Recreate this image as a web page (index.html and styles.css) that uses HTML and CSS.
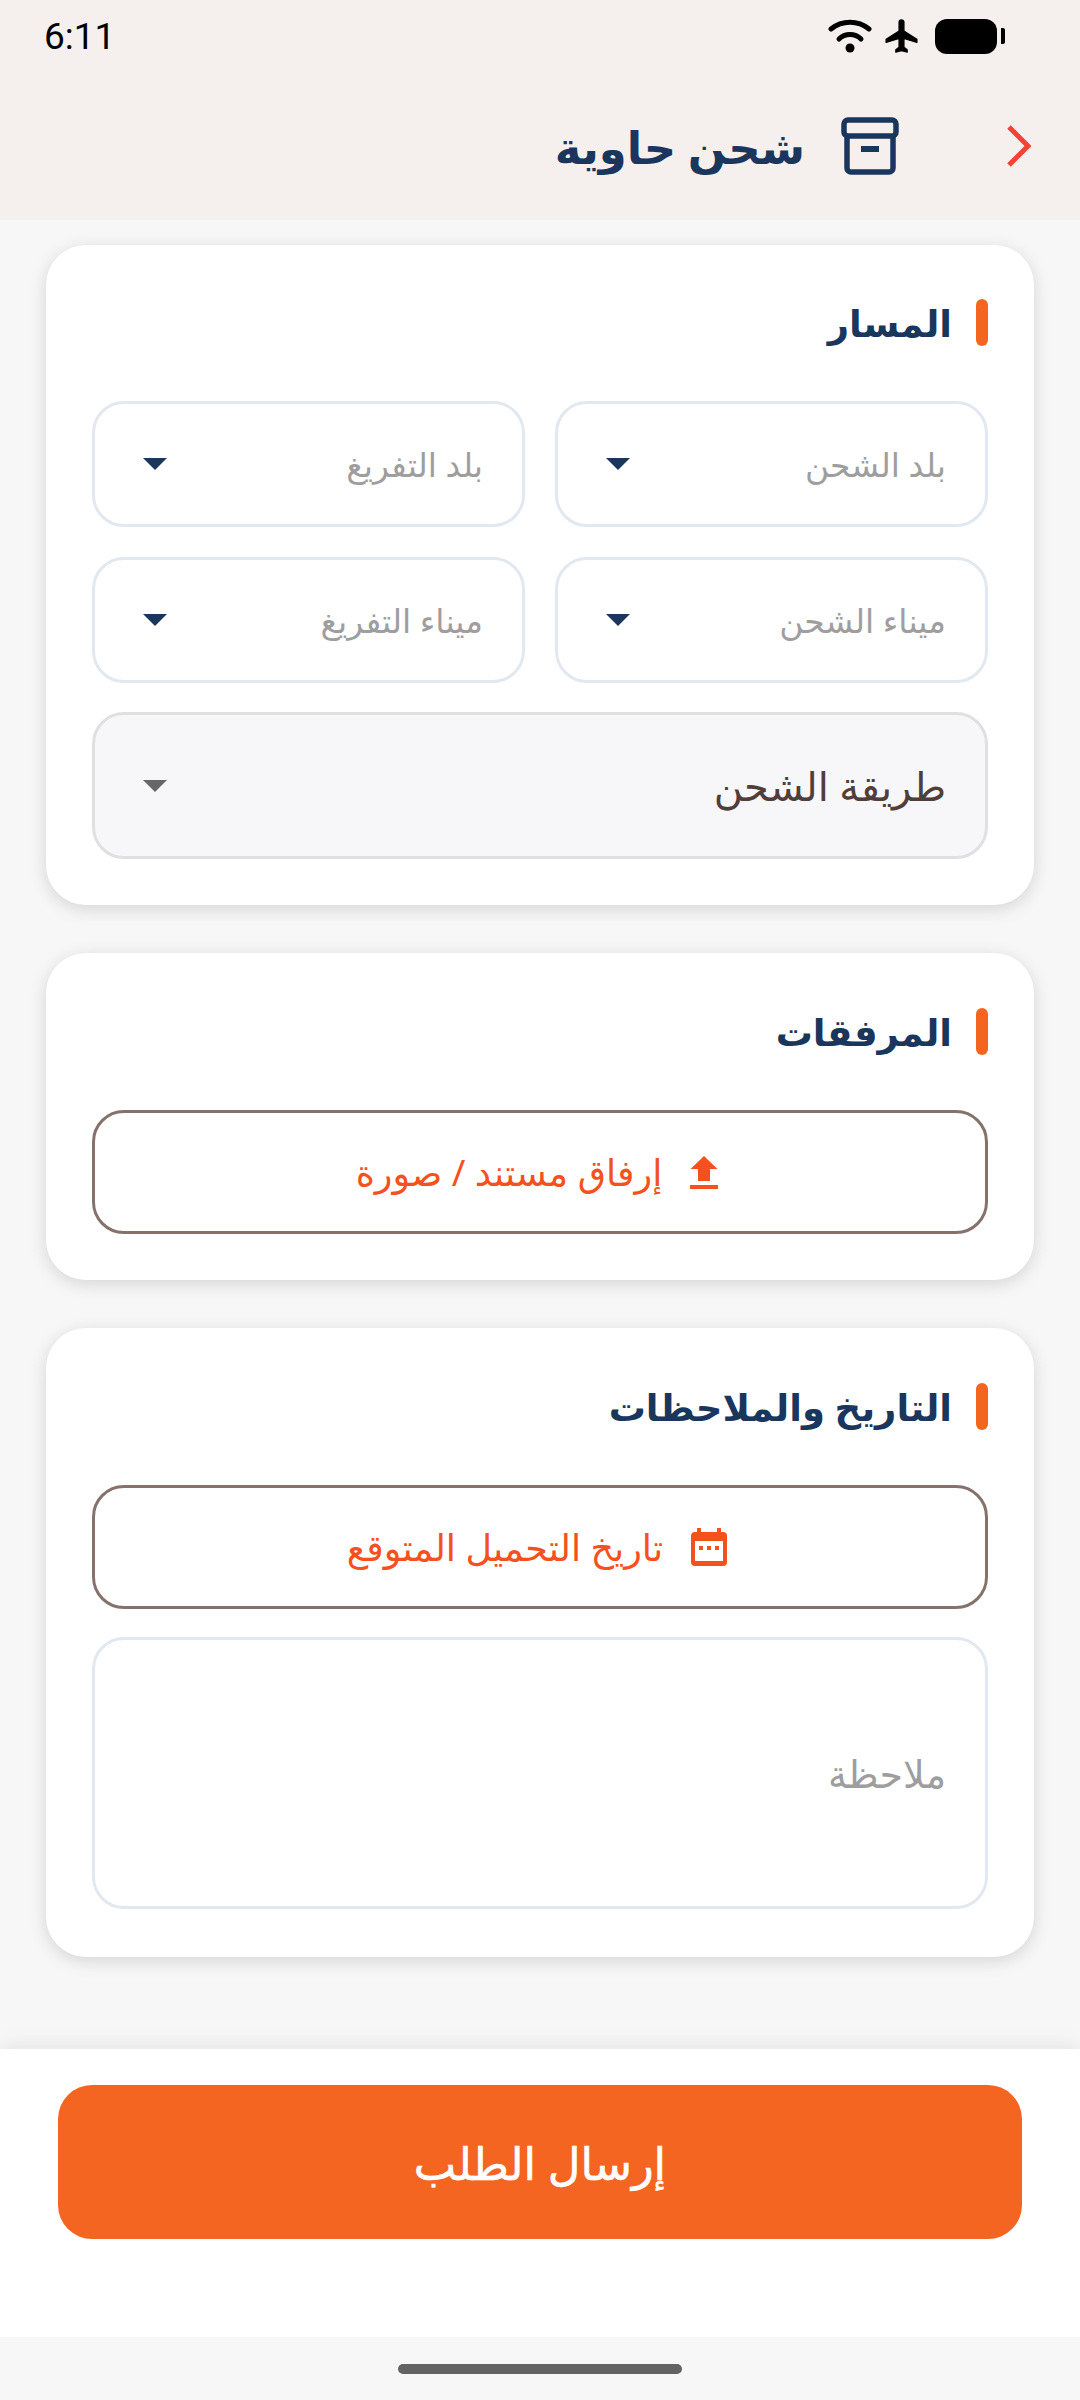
FILE: index.html
```html
<!DOCTYPE html>
<html lang="ar" dir="rtl">
<head>
    <meta charset="UTF-8">
    <meta name="viewport" content="width=device-width, initial-scale=1.0">
    <title>شحن حاوية</title>
    <link rel="stylesheet" href="styles.css">
</head>
<body>
    <div class="top-area">
        <div class="status-bar" dir="ltr">
            <span class="status-time">6:11</span>
            <div class="status-icons">
                <svg class="icon-wifi" viewBox="0 0 44 34" width="44" height="34">
                    <path d="M3 10C14 1 30 1 41 10" fill="none" stroke="#000" stroke-width="5" stroke-linecap="round"/>
                    <path d="M11 20C17 14 27 14 33 20" fill="none" stroke="#000" stroke-width="5" stroke-linecap="round"/>
                    <circle cx="22" cy="29" r="4.500" fill="#000"/>
                </svg>
                <svg class="icon-plane" viewBox="1.500 1.500 20 21" width="35" height="34">
                    <path d="M21 16v-2l-8-5V3.500C13 2.700 12.300 2 11.500 2S10 2.700 10 3.500V9l-8 5v2l8-2.500V19l-2 1.500V22l3.500-1 3.500 1v-1.500L13 19v-5.500l8 2.500z" fill="#000" stroke="#000" stroke-width="0.800" stroke-linejoin="round"/>
                </svg>
                <div class="battery"><div class="battery-body"></div><div class="battery-tip"></div></div>
            </div>
        </div>
        <header class="app-bar">
            <svg class="back-arrow" viewBox="0 0 24 42" width="24" height="42">
                <path d="M2 2L21 21L2 40" fill="none" stroke="#f44336" stroke-width="5"/>
            </svg>
            <svg class="box-icon" viewBox="0 0 58 58" width="58" height="58">
                <rect x="3" y="3" width="52" height="16" rx="4" fill="none" stroke="#1a365d" stroke-width="5.500"/>
                <path d="M6 19V51a4 4 0 0 0 4 4H48a4 4 0 0 0 4-4V19" fill="none" stroke="#1a365d" stroke-width="5.500"/>
                <rect x="20" y="29" width="18" height="6" fill="#1a365d"/>
            </svg>
            <h1 class="app-title">شحن حاوية</h1>
        </header>
    </div>

    <main class="content">
        <section class="card">
            <h2 class="card-title">المسار</h2>
            <div class="field-grid">
                <div class="select-field"><span>بلد الشحن</span><i class="caret"></i></div>
                <div class="select-field"><span>بلد التفريغ</span><i class="caret"></i></div>
                <div class="select-field"><span>ميناء الشحن</span><i class="caret"></i></div>
                <div class="select-field"><span>ميناء التفريغ</span><i class="caret"></i></div>
            </div>
            <div class="select-field method-field"><span>طريقة الشحن</span><i class="caret"></i></div>
        </section>

        <section class="card">
            <h2 class="card-title">المرفقات</h2>
            <div class="outline-btn">
                <svg viewBox="0 0 28 33" width="28" height="33">
                    <path d="M14 0L27.500 13H20V25H8V13H0.500z M0 29H28V33H0z" fill="#f4511e"/>
                </svg>
                <span>إرفاق مستند / صورة</span>
            </div>
        </section>

        <section class="card">
            <h2 class="card-title">التاريخ والملاحظات</h2>
            <div class="outline-btn">
                <svg viewBox="0 0 36 38" width="36" height="38">
                    <path d="M6 0h4v4H26V0h4v4h2a4 4 0 0 1 4 4V34a4 4 0 0 1-4 4H4a4 4 0 0 1-4-4V8a4 4 0 0 1 4-4h2z M4 13V33H32V13z" fill="#f4511e" fill-rule="evenodd"/>
                    <rect x="8" y="18" width="4" height="4" fill="#f4511e"/>
                    <rect x="16" y="18" width="4" height="4" fill="#f4511e"/>
                    <rect x="24" y="18" width="4" height="4" fill="#f4511e"/>
                </svg>
                <span>تاريخ التحميل المتوقع</span>
            </div>
            <div class="note-field">ملاحظة</div>
        </section>
    </main>

    <div class="bottom-bar">
        <button class="submit-btn">إرسال الطلب</button>
    </div>
    <div class="nav-bar"><div class="home-pill"></div></div>
</body>
</html>
```

FILE: styles.css
```css
* {
    box-sizing: border-box;
}
html, body {
    margin: 0;
    padding: 0;
}
body {
    width: 1080px;
    height: 2400px;
    display: flex;
    flex-direction: column;
    font-family: "Noto Sans", "DejaVu Sans", sans-serif;
    background-color: #f7f7f7;
    overflow: hidden;
}
.top-area {
    height: 220px;
    background-color: #f5f0ee;
}
.status-bar {
    height: 72px;
    padding: 0 75px 0 44px;
    display: flex;
    justify-content: space-between;
    align-items: center;
}
.status-time {
    font-family: Roboto, sans-serif;
    font-size: 37px;
    color: #000;
}
.status-icons {
    display: flex;
    align-items: center;
    gap: 12px;
}
.icon-plane {
    margin-right: 4px;
}
.battery {
    display: flex;
    align-items: center;
    gap: 4px;
}
.battery-body {
    width: 62px;
    height: 35px;
    background-color: #000;
    border-radius: 12px;
}
.battery-tip {
    width: 4px;
    height: 16px;
    background-color: #000;
    border-radius: 0 2px 2px 0;
}
.app-bar {
    height: 148px;
    padding: 0 49px 0 0;
    display: flex;
    align-items: center;
}
.back-arrow {
    margin-left: 108px;
}
.box-icon {
    margin-left: 36px;
}
.app-title {
    margin: 0;
    font-size: 45px;
    font-weight: 700;
    color: #1a365d;
}
.content {
    flex: 1;
    padding: 25px 46px 0;
    display: flex;
    flex-direction: column;
    gap: 48px;
}
.card {
    background: #fff;
    border-radius: 40px;
    padding: 54px 46px 46px;
    box-shadow: 0 4px 18px rgba(0, 0, 0, 0.14);
}
.card + .card {
    padding-top: 55px;
}
.card-title {
    margin: 0 0 55px;
    height: 47px;
    display: flex;
    align-items: center;
    gap: 24px;
    font-size: 37px;
    font-weight: 700;
    color: #1a365d;
}
/* petite barre orange a droite du titre */
.card-title::before {
    content: "";
    width: 12px;
    height: 47px;
    border-radius: 6px;
    background-color: #f4651f;
}
.field-grid {
    display: grid;
    grid-template-columns: 1fr 1fr;
    gap: 30px;
}
.select-field {
    height: 126px;
    border: 3px solid #e2e8f0;
    border-radius: 32px;
    padding: 0 39px 0 48px;
    display: flex;
    justify-content: space-between;
    align-items: center;
    font-size: 33px;
    color: #9e9e9e;
    background: #fff;
}
.caret {
    width: 0;
    height: 0;
    border-left: 12px solid transparent;
    border-right: 12px solid transparent;
    border-top: 12px solid #1a365d;
}
.method-field {
    height: 147px;
    margin-top: 29px;
    background-color: #f7f7fa;
    border-color: #e0e0e0;
    font-size: 40px;
    color: #4e3f3a;
}
.method-field .caret {
    border-top-color: #666;
}
.outline-btn {
    height: 124px;
    border: 3px solid #84726b;
    border-radius: 32px;
    padding-right: 6px;
    display: flex;
    justify-content: center;
    align-items: center;
    gap: 28px;
    font-size: 36.500px;
    color: #f4511e;
}
.note-field {
    height: 272px;
    margin: 28px 0 2px;
    border: 3px solid #e2e8f0;
    border-radius: 32px;
    padding: 0 39px;
    display: flex;
    align-items: center;
    font-size: 38px;
    color: #9e9e9e;
}
.bottom-bar {
    height: 288px;
    padding: 36px 58px 0;
    background: #fff;
    box-shadow: 0 -4px 20px rgba(0, 0, 0, 0.08);
}
.submit-btn {
    width: 100%;
    height: 154px;
    border: none;
    border-radius: 34px;
    background-color: #f46522;
    color: #fff;
    font-family: inherit;
    font-size: 45px;
    -webkit-text-stroke: 0.6px #fff;
}
.nav-bar {
    height: 63px;
    display: flex;
    justify-content: center;
    padding-top: 27px;
    background-color: #f7f7f7;
}
.home-pill {
    width: 284px;
    height: 10px;
    border-radius: 5px;
    background-color: #636363;
}
```
